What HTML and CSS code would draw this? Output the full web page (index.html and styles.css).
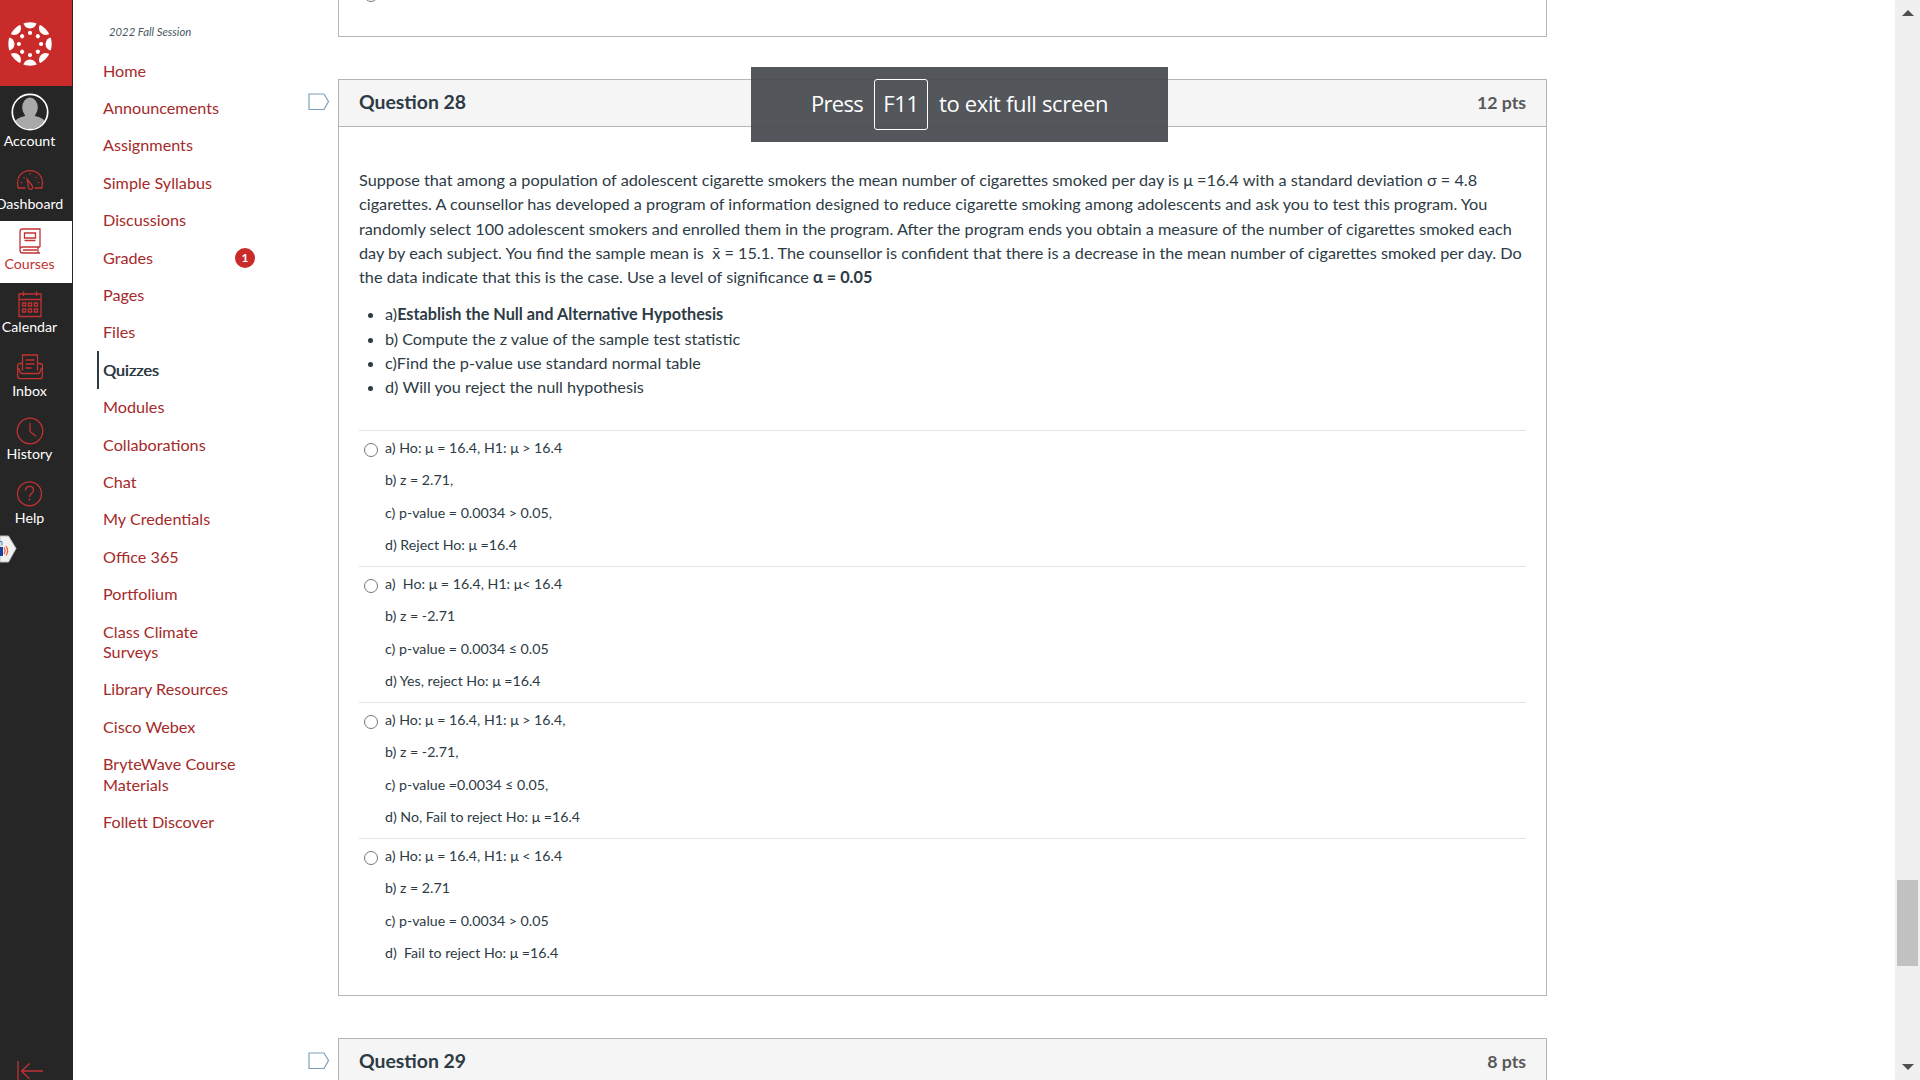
FILE: index.html
```html
<!DOCTYPE html>
<html lang="en">
<head>
    <meta charset="UTF-8">
    <meta name="viewport" content="width=device-width, initial-scale=1.0">
    <title>Quiz: 2022 Fall Session</title>
    <link rel="stylesheet" href="styles.css">
</head>
<body>
    <div class="app">
        <nav class="global-nav">
            <a class="logo" href="#">
                <svg width="44" height="44" viewBox="-22 -22 44 44" fill="#fff">
                    <defs>
                        <clipPath id="disc"><circle r="21.7"/></clipPath>
                        <g id="petal"><circle cy="-22.3" r="6.8"/><circle cy="-11.1" r="2.1"/></g>
                    </defs>
                    <g clip-path="url(#disc)">
                        <use href="#petal"/>
                        <use href="#petal" transform="rotate(45)"/>
                        <use href="#petal" transform="rotate(90)"/>
                        <use href="#petal" transform="rotate(135)"/>
                        <use href="#petal" transform="rotate(180)"/>
                        <use href="#petal" transform="rotate(225)"/>
                        <use href="#petal" transform="rotate(270)"/>
                        <use href="#petal" transform="rotate(315)"/>
                    </g>
                </svg>
            </a>
            <a class="nav-item account" href="#">
                <svg width="38" height="38" viewBox="0 0 38 38">
                    <defs><clipPath id="face"><circle cx="19" cy="19" r="17"/></clipPath></defs>
                    <g clip-path="url(#face)" fill="#a9a9a9">
                        <ellipse cx="19" cy="14.5" rx="7.8" ry="10"/>
                        <path d="M14 20h10v3c5 1 10 3 11 8v5H3v-5c1-5 6-7 11-8z"/>
                    </g>
                    <circle cx="19" cy="19" r="17.7" fill="none" stroke="#fff" stroke-width="1.7"/>
                </svg>
                <span>Account</span>
            </a>
            <a class="nav-item dashboard" href="#">
                <svg class="icon" width="28" height="28" viewBox="0 0 28 28">
                    <path d="M9.500 22H2.200C1 17 1 12.700 4 9.200C6.500 6.200 10 4.600 14 4.600s7.500 1.600 10 4.600c3 3.500 3 7.800 1.800 12.800h-7.300"/>
                    <path d="M11.300 13.300l4.700 6.200c1 1.500.8 3-.5 3.700-1.300.6-2.600 0-3-1.500z"/>
                    <path d="M14 7.200v1.500M7.500 11.200l1 .9M20.500 11.200l-1 .9M4.800 16.600h1.500M21.700 16.600h1.500"/>
                </svg>
                <span>Dashboard</span>
            </a>
            <a class="nav-item active" href="#">
                <svg class="icon" width="28" height="28" viewBox="0 0 28 28">
                    <path d="M24 20V2H6.500C4.800 2 4 3 4 4.700V23c0 1.800 1 3 2.700 3H24M4.200 21.500c.4-1 1.200-1.500 2.400-1.500H24M22 20v6M7 23h14"/>
                    <path d="M8.500 6h11v5h-11zM8.500 13.500h11"/>
                </svg>
                <span>Courses</span>
            </a>
            <a class="nav-item" href="#">
                <svg class="icon" width="28" height="28" viewBox="0 0 28 28">
                    <path d="M3 4h22v22.500H3zM3 9.500h22M7.500 1.500v4.500M20.500 1.500v4.500"/>
                    <path d="M6.500 13h3.200v3H6.500zM12.400 13h3.200v3h-3.200zM18.300 13h3.200v3h-3.200zM6.500 19h3.200v3H6.500zM12.400 19h3.200v3h-3.200zM18.300 19h3.200v3h-3.200z"/>
                </svg>
                <span>Calendar</span>
            </a>
            <a class="nav-item" href="#">
                <svg class="icon" width="28" height="28" viewBox="0 0 28 28">
                    <path d="M6.500 17.500V2h15v15.500M9.500 7h9M9.500 11h9M9.500 15h6"/>
                    <path d="M6.500 10.500H4c-1.500 0-2.400 1-2.400 2.500v10c0 1.700 1 2.700 2.500 2.700h19.800c1.500 0 2.500-1 2.500-2.700V13c0-1.500-.9-2.500-2.400-2.500h-2.500M1.600 15.500c1.200 0 2 .7 2 2 0 2 .8 3 2.600 3h15.600c1.800 0 2.600-1 2.600-3 0-1.300.8-2 2-2"/>
                </svg>
                <span>Inbox</span>
            </a>
            <a class="nav-item" href="#">
                <svg class="icon" width="28" height="28" viewBox="0 0 28 28">
                    <circle cx="14" cy="14" r="12.800"/>
                    <path d="M14 6v8.500l6 4.800"/>
                </svg>
                <span>History</span>
            </a>
            <a class="nav-item" href="#">
                <svg class="icon" width="28" height="28" viewBox="0 0 28 28">
                    <circle cx="13.500" cy="13.800" r="12"/>
                    <path d="M9.500 10.500c0-2.600 1.700-4.200 4-4.200s4 1.600 4 3.800c0 3.300-4 3.500-4 7M13.500 18.500v2"/>
                </svg>
                <span>Help</span>
            </a>
            <svg class="reader-tab" width="17" height="28" viewBox="0 0 17 28">
                <path d="M0 1h8.500L16 13.500 8.500 27H0z" fill="#f1f1f1" stroke="#bbb"/>
                <path d="M0 12h3v9H0z" fill="#1b3f9c"/>
                <path d="M0 6.500h2v4" fill="none" stroke="#4a86c5"/>
                <path d="M4 12.500c1.300 2 1.300 4.500 0 6.500M6 11c2 2.800 2 6.500 0 9.500" fill="none" stroke="#f0592b" stroke-width="1.200"/>
            </svg>
            <svg class="collapse" width="26" height="20" viewBox="0 0 26 20">
                <path d="M1 0v20M5 10h21M12.500 2.500L4.500 10l8 8"/>
            </svg>
        </nav>

        <aside class="course-menu">
            <p class="term">2022 Fall Session</p>
            <ul>
                <li><a href="#">Home</a></li>
                <li><a href="#">Announcements</a></li>
                <li><a href="#">Assignments</a></li>
                <li><a href="#">Simple Syllabus</a></li>
                <li><a href="#">Discussions</a></li>
                <li><a href="#">Grades</a><span class="badge">1</span></li>
                <li><a href="#">Pages</a></li>
                <li><a href="#">Files</a></li>
                <li class="current"><a href="#">Quizzes</a></li>
                <li><a href="#">Modules</a></li>
                <li><a href="#">Collaborations</a></li>
                <li><a href="#">Chat</a></li>
                <li><a href="#">My Credentials</a></li>
                <li><a href="#">Office 365</a></li>
                <li><a href="#">Portfolium</a></li>
                <li><a href="#">Class Climate<br>Surveys</a></li>
                <li><a href="#">Library Resources</a></li>
                <li><a href="#">Cisco Webex</a></li>
                <li><a href="#">BryteWave Course<br>Materials</a></li>
                <li><a href="#">Follett Discover</a></li>
            </ul>
        </aside>

        <main class="quiz">
            <div class="question-row previous">
                <section class="question">
                    <span class="radio"></span>
                </section>
            </div>

            <div class="question-row">
                <svg class="flag" width="22" height="18" viewBox="0 0 22 18">
                    <path d="M1 1h15l4.500 7.500L16 16.500H1z"/>
                </svg>
                <section class="question">
                    <header class="question-header">
                        <h2>Question 28</h2>
                        <span class="points">12 pts</span>
                    </header>
                    <div class="question-body">
                        <p class="prompt">
                            Suppose that among a population of adolescent cigarette smokers the mean number of cigarettes smoked per day is μ =16.4 with a standard deviation σ = 4.8<br>
                            cigarettes. A counsellor has developed a program of information designed to reduce cigarette smoking among adolescents and ask you to test this program. You<br>
                            randomly select 100 adolescent smokers and enrolled them in the program. After the program ends you obtain a measure of the number of cigarettes smoked each<br>
                            day by each subject. You find the sample mean is&nbsp; x̄ = 15.1. The counsellor is confident that there is a decrease in the mean number of cigarettes smoked per day. Do<br>
                            the data indicate that this is the case. Use a level of significance <strong>α = 0.05</strong>
                        </p>
                        <ul class="tasks">
                            <li>a)<strong>Establish the Null and Alternative Hypothesis</strong></li>
                            <li>b) Compute the z value of the sample test statistic</li>
                            <li>c)Find the p-value use standard normal table</li>
                            <li>d) Will you reject the null hypothesis</li>
                        </ul>
                        <div class="answer">
                            <span class="radio"></span>
                            <div>
                                <p>a) Ho: μ = 16.4, H1: μ &gt; 16.4</p>
                                <p>b) z = 2.71,</p>
                                <p>c) p-value = 0.0034 &gt; 0.05,</p>
                                <p>d) Reject Ho: μ =16.4</p>
                            </div>
                        </div>
                        <div class="answer">
                            <span class="radio"></span>
                            <div>
                                <p>a)&nbsp; Ho: μ = 16.4, H1: μ&lt; 16.4</p>
                                <p>b) z = -2.71</p>
                                <p>c) p-value = 0.0034 ≤ 0.05</p>
                                <p>d) Yes, reject Ho: μ =16.4</p>
                            </div>
                        </div>
                        <div class="answer">
                            <span class="radio"></span>
                            <div>
                                <p>a) Ho: μ = 16.4, H1: μ &gt; 16.4,</p>
                                <p>b) z = -2.71,</p>
                                <p>c) p-value =0.0034 ≤ 0.05,</p>
                                <p>d) No, Fail to reject Ho: μ =16.4</p>
                            </div>
                        </div>
                        <div class="answer">
                            <span class="radio"></span>
                            <div>
                                <p>a) Ho: μ = 16.4, H1: μ &lt; 16.4</p>
                                <p>b) z = 2.71</p>
                                <p>c) p-value = 0.0034 &gt; 0.05</p>
                                <p>d)&nbsp; Fail to reject Ho: μ =16.4</p>
                            </div>
                        </div>
                    </div>
                </section>
            </div>

            <div class="question-row">
                <svg class="flag" width="22" height="18" viewBox="0 0 22 18">
                    <path d="M1 1h15l4.500 7.500L16 16.500H1z"/>
                </svg>
                <section class="question">
                    <header class="question-header">
                        <h2>Question 29</h2>
                        <span class="points">8 pts</span>
                    </header>
                </section>
            </div>
        </main>

        <div class="scrollbar">
            <svg width="12" height="6" viewBox="0 0 12 6"><path d="M0 6l6-6 6 6z"/></svg>
            <div class="thumb"></div>
            <svg width="12" height="6" viewBox="0 0 12 6"><path d="M0 0l6 6 6-6z"/></svg>
        </div>
    </div>

    <div class="fullscreen-hint">
        <span class="press">Press</span>
        <kbd>F11</kbd>
        <span class="exit">to exit full screen</span>
    </div>
</body>
</html>
```

FILE: styles.css
```css
* {
    box-sizing: border-box;
}
body {
    margin: 0;
    height: 1080px;
    overflow: hidden;
    background: #fff;
    color: #2d3b45;
    font-family: Lato, "Open Sans", sans-serif;
    font-size: 16.200px;
}
a {
    text-decoration: none;
}
p, ul, h2 {
    margin: 0;
    padding: 0;
}
.app {
    display: flex;
    height: 1080px;
    overflow: hidden;
}

/* global navigation */
.global-nav {
    display: flex;
    flex-direction: column;
    flex: none;
    width: 73px;
    height: 1080px;
    overflow: hidden;
    background: #262626;
}
.logo {
    display: flex;
    flex: none;
    width: 72px;
    height: 86px;
    padding: 21.500px 0 0 7.500px;
    background: #c92a2a;
}
.nav-item {
    display: flex;
    flex-direction: column;
    flex: none;
    align-items: center;
    width: 85px;
    height: 63.500px;
    margin-left: -13px;
    padding-top: 6.500px;
    color: #fff;
    font-size: 14.200px;
    line-height: 20px;
}
.nav-item span {
    margin-top: -0.500px;
    white-space: nowrap;
}
.account {
    height: 71px;
    padding-top: 7px;
}
.dashboard {
    height: 64px;
    padding-top: 9px;
}
.active {
    height: 62px;
    padding-top: 5.500px;
    background: #fff;
    color: #c23232;
}
.icon, .collapse {
    flex: none;
    fill: none;
    stroke: #c23232;
    stroke-width: 1.300;
}
.reader-tab {
    flex: none;
    margin-top: -2px;
}
.collapse {
    margin: auto 0 -1px 17px;
}

/* course menu */
.course-menu {
    flex: none;
    width: 265px;
    padding: 22px 0 0 24px;
}
.term {
    padding-left: 12px;
    color: #4c5860;
    font-size: 11.300px;
    font-style: italic;
    line-height: 20px;
}
.course-menu ul {
    margin-top: 10px;
    list-style: none;
}
.course-menu li {
    display: flex;
    justify-content: space-between;
    width: 158px;
    padding: 8.500px 0 8.500px 6px;
    line-height: 20.400px;
    white-space: nowrap;
}
.course-menu a {
    color: #a52a2a;
}
.course-menu .current {
    border-left: 2px solid #2d3b45;
    padding-left: 4px;
}
.course-menu .current a {
    color: #2d3b45;
    text-shadow: 0.400px 0 0 #2d3b45;
}
.badge {
    width: 20px;
    height: 20px;
    border-radius: 50%;
    background: #c92a2a;
    color: #fff;
    font-size: 12px;
    font-weight: bold;
    line-height: 19px;
    text-align: center;
}

/* questions */
.quiz {
    flex: none;
    width: 1209px;
}
.question-row {
    position: relative;
    margin-bottom: 42px;
}
.flag {
    position: absolute;
    left: -30px;
    top: 14px;
    fill: #fff;
    stroke: #7d9fba;
    stroke-width: 1.200;
}
.question {
    border: 1px solid #b5b5b5;
}
.previous .question {
    display: flex;
    height: 37px;
    border-top: 0;
    padding-left: 25px;
}
.previous .radio {
    margin-top: -12px;
}
.question-header {
    display: flex;
    justify-content: space-between;
    align-items: center;
    height: 47px;
    padding: 0 20px 1px 20px;
    border-bottom: 1px solid #b5b5b5;
    background: #f5f5f5;
}
h2 {
    padding-bottom: 2px;
    font-size: 19.400px;
    font-weight: bold;
}
.points {
    color: #595959;
    font-size: 17.700px;
    font-weight: bold;
}
.question-body {
    height: 868px;
    padding: 41px 20px 0 20px;
}
.prompt, .tasks {
    font-size: 16.250px;
    line-height: 24.300px;
    white-space: nowrap;
}
.tasks {
    margin: 13px 0 30.500px;
    padding-left: 26px;
}
.answer {
    display: flex;
    height: 136px;
    padding: 1px 0 0 5px;
    border-top: 1px solid #e3e3e3;
    font-size: 14.200px;
    line-height: 32.300px;
}
.radio {
    display: block;
    flex: none;
    width: 14px;
    height: 14px;
    margin: 11px 7px 0 0;
    border: 1px solid #767676;
    border-radius: 50%;
}

.scrollbar {
    display: flex;
    flex-direction: column;
    align-items: center;
    width: 25px;
    margin-left: auto;
    padding: 10px 0;
    background: #f0f0f0;
    fill: #505050;
}
.thumb {
    width: 21px;
    height: 86px;
    margin: 864px 0 auto;
    background: #c1c1c1;
}

/* browser overlay on top of the page */
.fullscreen-hint {
    position: absolute;
    left: 751px;
    top: 67px;
    display: flex;
    align-items: center;
    width: 417px;
    height: 75px;
    padding-left: 60px;
    background: rgba(72, 75, 80, 0.940);
    color: #fff;
    font-family: "Open Sans", "Noto Sans", sans-serif;
    font-size: 22px;
    letter-spacing: -0.350px;
    white-space: nowrap;
}
.press {
    width: 63px;
    padding-bottom: 3px;
    letter-spacing: -0.700px;
}
.exit {
    padding-bottom: 3px;
}
kbd {
    width: 54px;
    height: 51px;
    margin-right: 11px;
    border: 1.500px solid #fff;
    border-radius: 3px;
    font-family: inherit;
    line-height: 47px;
    text-align: center;
}
```
